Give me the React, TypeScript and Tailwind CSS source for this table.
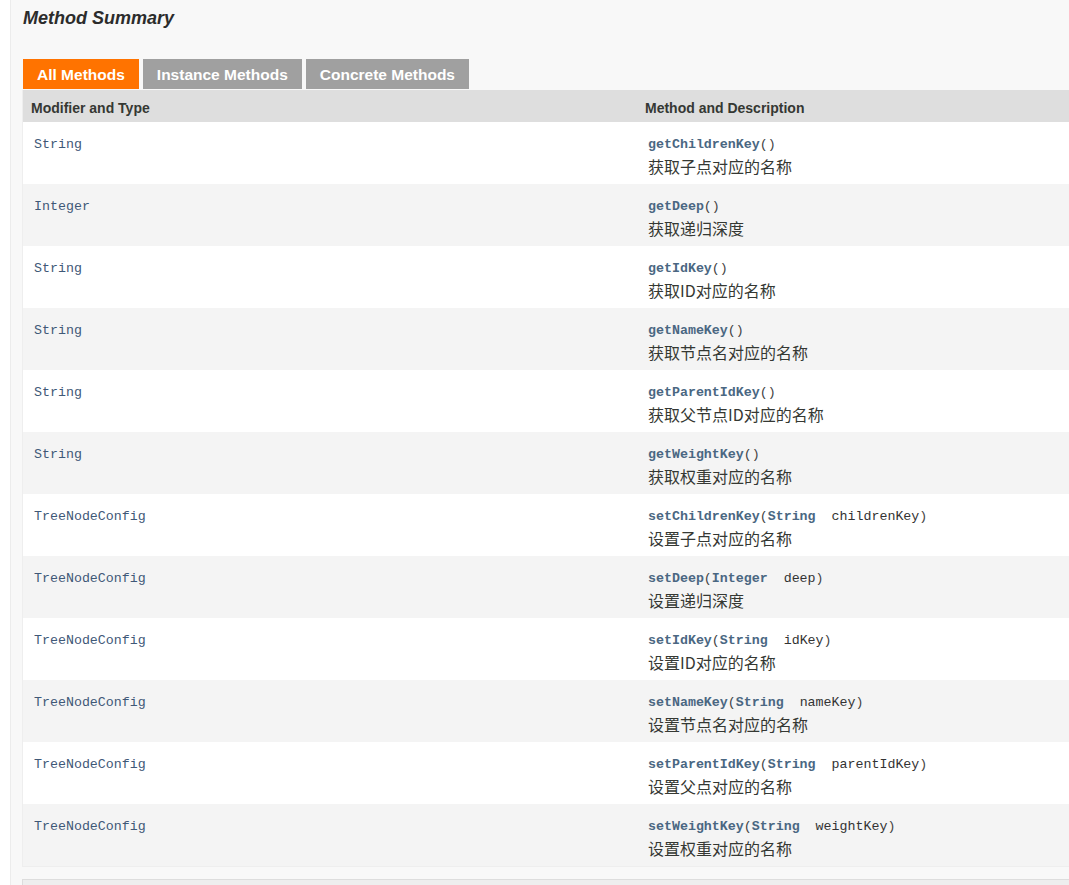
import React from 'react';

type Row = {
  type: string;
  name: string;
  paramType?: string;
  param?: string;
  desc: string;
};

const rows: Row[] = [
  { type: 'String', name: 'getChildrenKey', desc: '获取子点对应的名称' },
  { type: 'Integer', name: 'getDeep', desc: '获取递归深度' },
  { type: 'String', name: 'getIdKey', desc: '获取ID对应的名称' },
  { type: 'String', name: 'getNameKey', desc: '获取节点名对应的名称' },
  { type: 'String', name: 'getParentIdKey', desc: '获取父节点ID对应的名称' },
  { type: 'String', name: 'getWeightKey', desc: '获取权重对应的名称' },
  { type: 'TreeNodeConfig', name: 'setChildrenKey', paramType: 'String', param: 'childrenKey', desc: '设置子点对应的名称' },
  { type: 'TreeNodeConfig', name: 'setDeep', paramType: 'Integer', param: 'deep', desc: '设置递归深度' },
  { type: 'TreeNodeConfig', name: 'setIdKey', paramType: 'String', param: 'idKey', desc: '设置ID对应的名称' },
  { type: 'TreeNodeConfig', name: 'setNameKey', paramType: 'String', param: 'nameKey', desc: '设置节点名对应的名称' },
  { type: 'TreeNodeConfig', name: 'setParentIdKey', paramType: 'String', param: 'parentIdKey', desc: '设置父点对应的名称' },
  { type: 'TreeNodeConfig', name: 'setWeightKey', paramType: 'String', param: 'weightKey', desc: '设置权重对应的名称' },
];

const mono = "font-['Liberation_Mono','Noto_Sans_CJK_SC',monospace] text-[13.3px]";
const sans = "font-['Liberation_Sans',Arial,sans-serif]";

export default function App() {
  return (
    <div className="w-[1069px] h-[885px] overflow-hidden bg-white pl-[10px]">
      <div className="h-full border-l border-[#ececec] bg-[#f8f8f8] pl-[11px] pt-[7px]">
        {/* Title */}
        <h3 className={`${sans} text-[18px] leading-[22px] font-bold italic text-[#2c2c2c] pl-[1px]`}>
          Method Summary
        </h3>

        {/* Tabs */}
        <div className={`${sans} flex gap-[4px] mt-[30px] pl-[1px] text-[15.5px] font-bold text-white`}>
          <span className="h-[30px] leading-[32px] px-[14px] bg-[#ff7300]">All Methods</span>
          <span className="h-[30px] leading-[32px] px-[14px] bg-[#a0a0a0]">Instance Methods</span>
          <span className="h-[30px] leading-[32px] px-[14px] bg-[#a0a0a0]">Concrete Methods</span>
        </div>

        {/* Table */}
        <div className="w-[1100px] border-l border-b border-[#eeeeee] mt-[1px]">
          <div className={`${sans} flex h-[32px] pt-[9px] leading-[18px] bg-[#dedede] text-[14px] font-bold text-[#353833]`}>
            <div className="w-[614px] pl-[8px]">Modifier and Type</div>
            <div className="pl-[8px]">Method and Description</div>
          </div>
          {rows.map((r, i) => (
            <div key={i} className={`flex h-[62px] ${i % 2 === 0 ? 'bg-white' : 'bg-[#f4f4f4]'}`}>
              <div className={`w-[614px] pl-[11px] pt-[13px] leading-[20px] text-[#3f5877] ${mono}`}>
                {r.type}
              </div>
              <div className="pl-[11px] pt-[13px]">
                <div className={`${mono} leading-[20px] whitespace-pre text-[#4a6782]`}>
                  <span className="font-bold">{r.name}</span>
                  <span className="text-[#444]">(</span>
                  {r.paramType && (
                    <>
                      <span className="font-bold">{r.paramType}</span>
                      <span className="text-[#333]">{'  ' + r.param}</span>
                    </>
                  )}
                  <span className="text-[#444]">)</span>
                </div>
                <div className="font-['Noto_Sans_CJK_SC',sans-serif] text-[16px] leading-[24px] -mt-[1px] text-[#353833]">
                  {r.desc}
                </div>
              </div>
            </div>
          ))}
        </div>

        {/* Next block */}
        <div className="w-[1100px] h-[20px] mt-[12px] border-l border-t border-[#dddddd] bg-[#eeeeee]" />
      </div>
    </div>
  );
}
